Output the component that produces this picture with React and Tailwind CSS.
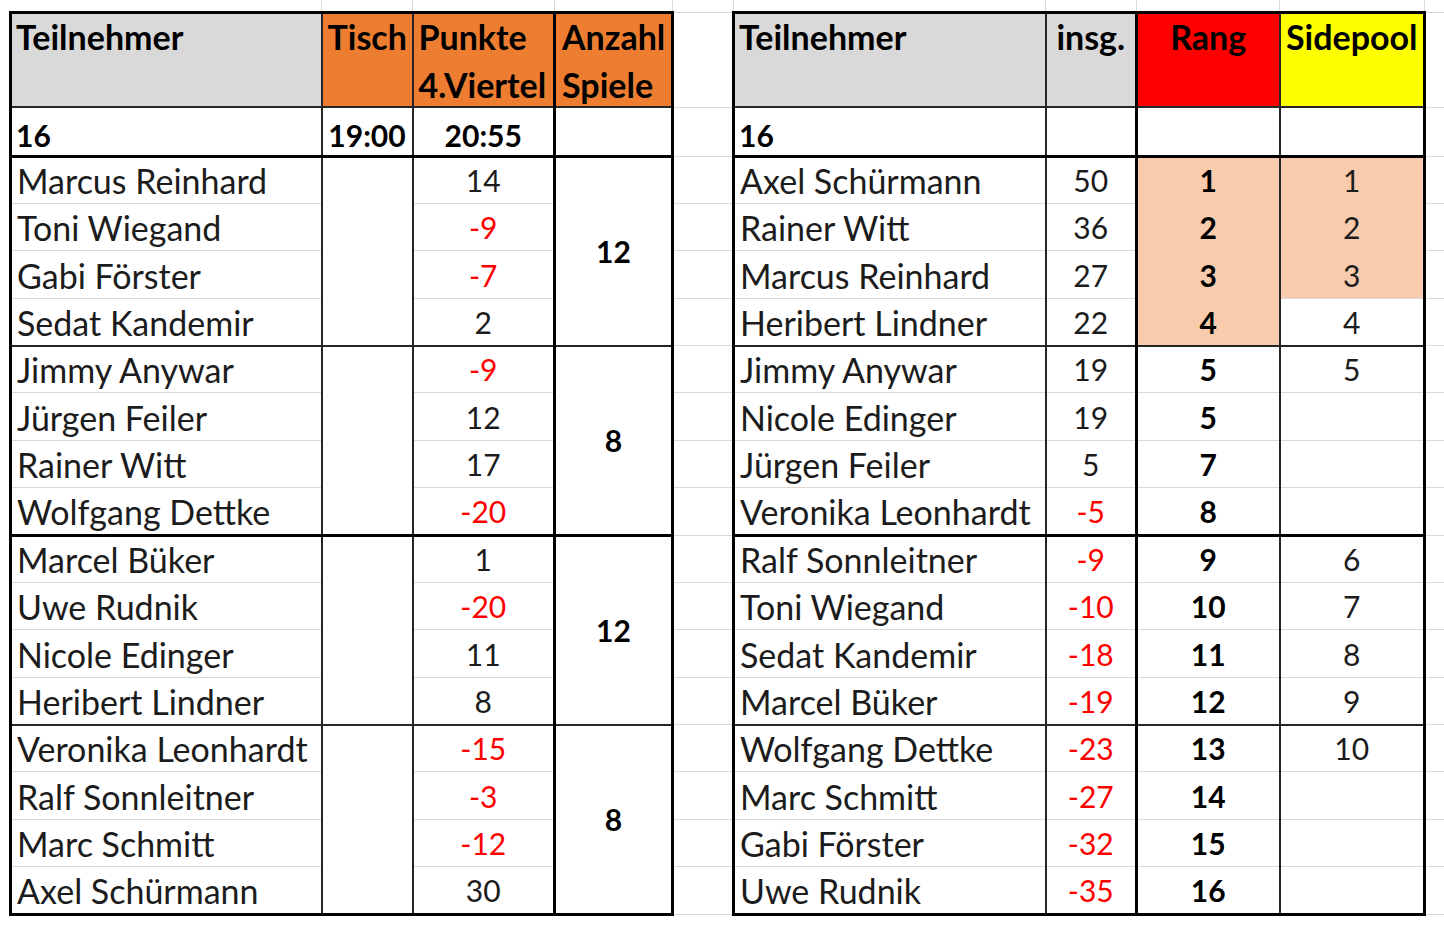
import React from "react";

// Spielstand — Tischrunde 4. Viertel (Excel-Blatt)
const left = [
  ["Marcus Reinhard", 14],
  ["Toni Wiegand", -9],
  ["Gabi Förster", -7],
  ["Sedat Kandemir", 2],
  ["Jimmy Anywar", -9],
  ["Jürgen Feiler", 12],
  ["Rainer Witt", 17],
  ["Wolfgang Dettke", -20],
  ["Marcel Büker", 1],
  ["Uwe Rudnik", -20],
  ["Nicole Edinger", 11],
  ["Heribert Lindner", 8],
  ["Veronika Leonhardt", -15],
  ["Ralf Sonnleitner", -3],
  ["Marc Schmitt", -12],
  ["Axel Schürmann", 30],
];

const spiele = [12, 8, 12, 8];

const right = [
  ["Axel Schürmann", 50, 1, 1],
  ["Rainer Witt", 36, 2, 2],
  ["Marcus Reinhard", 27, 3, 3],
  ["Heribert Lindner", 22, 4, 4],
  ["Jimmy Anywar", 19, 5, 5],
  ["Nicole Edinger", 19, 5, ""],
  ["Jürgen Feiler", 5, 7, ""],
  ["Veronika Leonhardt", -5, 8, ""],
  ["Ralf Sonnleitner", -9, 9, 6],
  ["Toni Wiegand", -10, 10, 7],
  ["Sedat Kandemir", -18, 11, 8],
  ["Marcel Büker", -19, 12, 9],
  ["Wolfgang Dettke", -23, 13, 10],
  ["Marc Schmitt", -27, 14, ""],
  ["Gabi Förster", -32, 15, ""],
  ["Uwe Rudnik", -35, 16, ""],
];

const cell = "border border-[#d9d9d9] p-0";
const nameText = "align-bottom whitespace-nowrap text-[34px] leading-[36px] pb-[4px] pl-[5px] text-[#1c1c1c]";
const numText = "align-bottom whitespace-nowrap text-[30px] leading-[36px] pb-[5px] text-center text-[#1c1c1c]";

// Unterkante je Zeile: Gruppenlinien nach 4 / 8 / 12 / 16
function bottomOf(i) {
  if (i === 7 || i === 15) return "border-b-[3px] border-b-black";
  if (i === 3 || i === 11) return "border-b-2 border-b-[#262626]";
  return "";
}

function num(v) {
  return v < 0 ? "text-[#ff0000]" : "";
}

// feste Höhe, damit der Zeilenumbruch die Kopfzeile nicht streckt
function Head({ children }) {
  return <div className="-mt-[1px] h-[80px]">{children}</div>;
}

export default function App() {
  return (
    <div
      className="w-[1444px] h-[928px] overflow-hidden bg-white pl-[9px]"
      style={{ fontFamily: "Lato, 'Open Sans', sans-serif" }}
    >
      <table className="table-fixed border-collapse">
        <colgroup>
          <col className="w-[311px]" />
          <col className="w-[91px]" />
          <col className="w-[142px]" />
          <col className="w-[118px]" />
          <col className="w-[61px]" />
          <col className="w-[312px]" />
          <col className="w-[91px]" />
          <col className="w-[143px]" />
          <col className="w-[145px]" />
          <col className="w-[19px]" />
        </colgroup>
        <tbody>
          {/* obere Rasterzeile */}
          <tr className="h-[12px]">
            <td className={`${cell} border-t-0 border-l-0`}></td>
            <td className={`${cell} border-t-0`}></td>
            <td className={`${cell} border-t-0`}></td>
            <td className={`${cell} border-t-0`}></td>
            <td className={`${cell} border-t-0`}></td>
            <td className={`${cell} border-t-0`}></td>
            <td className={`${cell} border-t-0`}></td>
            <td className={`${cell} border-t-0`}></td>
            <td className={`${cell} border-t-0`}></td>
            <td className={`${cell} border-t-0 border-r-0`}></td>
          </tr>

          {/* Kopfzeile */}
          <tr className="h-[95px] text-[34px] font-bold leading-[48px] text-black">
            <td className={`${cell} border-t-[3px] border-t-black border-l-[3px] border-l-black border-r-2 border-r-[#262626] border-b-2 border-b-[#262626] bg-[#d9d9d9] align-top pl-[4px]`}>
              <Head>Teilnehmer</Head>
            </td>
            <td className={`${cell} border-t-[3px] border-t-black border-r-2 border-r-[#262626] border-b-2 border-b-[#262626] bg-[#ed7d31] align-top pl-[5px]`}>
              <Head>Tisch</Head>
            </td>
            <td className={`${cell} border-t-[3px] border-t-black border-r-[3px] border-r-black border-b-2 border-b-[#262626] bg-[#ed7d31] align-top pl-[5px] whitespace-nowrap`}>
              <Head>
                Punkte
                <br />
                4.Viertel
              </Head>
            </td>
            <td className={`${cell} border-t-[3px] border-t-black border-r-[3px] border-r-black border-b-2 border-b-[#262626] bg-[#ed7d31] align-top pl-[6px] whitespace-nowrap`}>
              <Head>
                Anzahl
                <br />
                Spiele
              </Head>
            </td>
            <td className={cell}></td>
            <td className={`${cell} border-t-[3px] border-t-black border-l-[3px] border-l-black border-r-2 border-r-[#262626] border-b-2 border-b-[#262626] bg-[#d9d9d9] align-top pl-[4px]`}>
              <Head>Teilnehmer</Head>
            </td>
            <td className={`${cell} border-t-[3px] border-t-black border-r-[3px] border-r-black border-b-2 border-b-[#262626] bg-[#d9d9d9] align-top text-center`}>
              <Head>insg.</Head>
            </td>
            <td className={`${cell} border-t-[3px] border-t-black border-r-2 border-r-[#262626] border-b-2 border-b-[#262626] bg-[#ff0000] align-top text-center`}>
              <Head>Rang</Head>
            </td>
            <td className={`${cell} border-t-[3px] border-t-black border-r-[3px] border-r-black border-b-2 border-b-[#262626] bg-[#ffff00] align-top text-center whitespace-nowrap`}>
              <Head>Sidepool</Head>
            </td>
            <td className={`${cell} border-r-0`}></td>
          </tr>

          {/* Zeile 16 / Uhrzeiten */}
          <tr className="h-[49px] text-[30px] font-bold leading-[36px] text-black">
            <td className={`${cell} border-l-[3px] border-l-black border-r-2 border-r-[#262626] border-b-[3px] border-b-black align-bottom pl-[4px] pb-[2px]`}>
              16
            </td>
            <td className={`${cell} border-r-2 border-r-[#262626] border-b-[3px] border-b-black align-bottom text-center pb-[2px]`}>
              19:00
            </td>
            <td className={`${cell} border-r-[3px] border-r-black border-b-[3px] border-b-black align-bottom text-center pb-[2px]`}>
              20:55
            </td>
            <td className={`${cell} border-r-[3px] border-r-black border-b-[3px] border-b-black`}></td>
            <td className={cell}></td>
            <td className={`${cell} border-l-[3px] border-l-black border-r-2 border-r-[#262626] border-b-[3px] border-b-black align-bottom pl-[4px] pb-[2px]`}>
              16
            </td>
            <td className={`${cell} border-r-[3px] border-r-black border-b-[3px] border-b-black`}></td>
            <td className={`${cell} border-r-2 border-r-[#262626] border-b-[3px] border-b-black`}></td>
            <td className={`${cell} border-r-[3px] border-r-black border-b-[3px] border-b-black`}></td>
            <td className={`${cell} border-r-0`}></td>
          </tr>

          {left.map(([name, pts], i) => {
            const [rName, insg, rang, side] = right[i];
            const first = i % 4 === 0;
            const rangPeach = i < 4;
            const sidePeach = i < 3;
            return (
              <tr key={name} className="h-[47.375px]">
                <td className={`${cell} ${nameText} border-l-[3px] border-l-black border-r-2 border-r-[#262626] ${bottomOf(i)}`}>
                  {name}
                </td>
                {first && (
                  <td
                    rowSpan={4}
                    className={`${cell} border-r-2 border-r-[#262626] ${bottomOf(i + 3)}`}
                  ></td>
                )}
                <td className={`${cell} ${numText} border-r-[3px] border-r-black ${bottomOf(i)} ${num(pts)}`}>
                  {pts}
                </td>
                {first && (
                  <td
                    rowSpan={4}
                    className={`${cell} border-r-[3px] border-r-black ${bottomOf(i + 3)} align-middle text-center text-[30px] font-bold text-black`}
                  >
                    {spiele[i / 4]}
                  </td>
                )}
                <td className={cell}></td>
                <td className={`${cell} ${nameText} border-l-[3px] border-l-black border-r-2 border-r-[#262626] ${bottomOf(i)}`}>
                  {rName}
                </td>
                <td className={`${cell} ${numText} border-r-[3px] border-r-black ${bottomOf(i)} ${num(insg)}`}>
                  {insg}
                </td>
                <td
                  className={`${cell} ${numText} border-r-2 border-r-[#262626] ${bottomOf(i)} font-bold text-black ${
                    rangPeach ? "bg-[#f8cbad]" : ""
                  } ${i < 3 ? "border-b-[#f8cbad]" : ""}`}
                >
                  {rang}
                </td>
                <td
                  className={`${cell} ${numText} border-r-[3px] border-r-black ${bottomOf(i)} ${
                    sidePeach ? "bg-[#f8cbad]" : ""
                  } ${i < 2 ? "border-b-[#f8cbad]" : ""}`}
                >
                  {side}
                </td>
                <td className={`${cell} border-r-0`}></td>
              </tr>
            );
          })}
        </tbody>
      </table>
    </div>
  );
}
